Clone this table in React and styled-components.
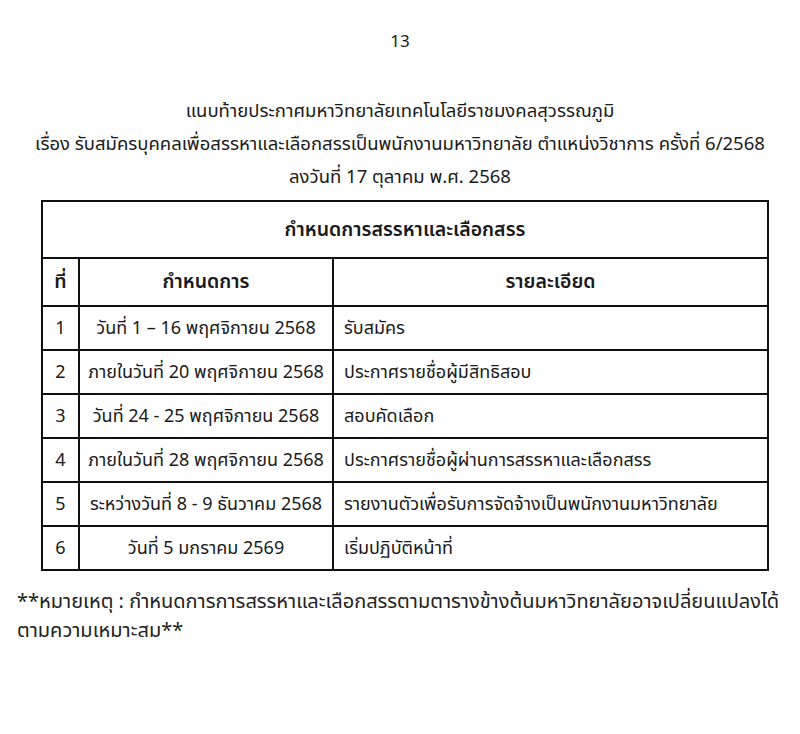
import React from "react";
import styled, { createGlobalStyle } from "styled-components";

const GlobalStyle = createGlobalStyle`
  html, body {
    margin: 0;
    padding: 0;
    background: #ffffff;
  }
  body {
    font-family: "Noto Sans Thai", "Noto Sans", Tahoma, "DejaVu Sans", sans-serif;
    color: #1a1a1a;
  }
`;

const Page = styled.div`
  width: 800px;
  height: 734px;
  box-sizing: border-box;
  padding-top: 28px;
  display: flex;
  flex-direction: column;
  align-items: center;
`;

const PageNumber = styled.div`
  font-size: 17px;
  line-height: 28px;
  height: 28px;
`;

const Heading = styled.div`
  margin-top: 39px;
  display: flex;
  flex-direction: column;
  align-items: center;
  font-size: 18.5px;
  line-height: 33px;
  white-space: nowrap;
`;

const Table = styled.table`
  margin-top: 6px;
  width: 728px;
  border-collapse: collapse;
  table-layout: fixed;
  font-size: 18px;
  margin-left: 10px;
`;

const Cell = styled.td`
  border: 2px solid #111;
  height: ${(p) => p.h || 44}px;
  padding: 0 ${(p) => (p.align === "left" ? "10px" : "4px")};
  text-align: ${(p) => p.align || "center"};
  font-weight: ${(p) => (p.bold ? 600 : 400)};
  font-size: ${(p) => (p.bold ? "19.5px" : "18px")};
  vertical-align: middle;
  white-space: nowrap;
  box-sizing: border-box;
`;

const Note = styled.div`
  align-self: stretch;
  margin-top: 17px;
  padding-left: 17px;
  font-size: 20px;
  line-height: 29px;
  color: #222;
  white-space: nowrap;
`;

const rows = [
  ["1", "วันที่ 1 – 16 พฤศจิกายน 2568", "รับสมัคร"],
  ["2", "ภายในวันที่ 20 พฤศจิกายน 2568", "ประกาศรายชื่อผู้มีสิทธิสอบ"],
  ["3", "วันที่ 24 - 25 พฤศจิกายน 2568", "สอบคัดเลือก"],
  ["4", "ภายในวันที่ 28 พฤศจิกายน 2568", "ประกาศรายชื่อผู้ผ่านการสรรหาและเลือกสรร"],
  ["5", "ระหว่างวันที่ 8 - 9 ธันวาคม 2568", "รายงานตัวเพื่อรับการจัดจ้างเป็นพนักงานมหาวิทยาลัย"],
  ["6", "วันที่ 5 มกราคม 2569", "เริ่มปฏิบัติหน้าที่"],
];

export default function App() {
  return (
    <>
      <GlobalStyle />
      <Page>
        <PageNumber>13</PageNumber>
        <Heading>
          <span>แนบท้ายประกาศมหาวิทยาลัยเทคโนโลยีราชมงคลสุวรรณภูมิ</span>
          <span>
            เรื่อง รับสมัครบุคคลเพื่อสรรหาและเลือกสรรเป็นพนักงานมหาวิทยาลัย
            ตำแหน่งวิชาการ ครั้งที่ 6/2568
          </span>
          <span>ลงวันที่ 17 ตุลาคม พ.ศ. 2568</span>
        </Heading>
        <Table>
          <colgroup>
            <col style={{ width: "37px" }} />
            <col style={{ width: "254px" }} />
            <col />
          </colgroup>
          <tbody>
            <tr>
              <Cell colSpan={3} bold h={57}>
                กำหนดการสรรหาและเลือกสรร
              </Cell>
            </tr>
            <tr>
              <Cell bold h={48}>ที่</Cell>
              <Cell bold h={48}>กำหนดการ</Cell>
              <Cell bold h={48}>รายละเอียด</Cell>
            </tr>
            {rows.map(([no, date, detail]) => (
              <tr key={no}>
                <Cell>{no}</Cell>
                <Cell>{date}</Cell>
                <Cell align="left">{detail}</Cell>
              </tr>
            ))}
          </tbody>
        </Table>
        <Note>
          <div>
            **หมายเหตุ : กำหนดการการสรรหาและเลือกสรรตามตารางข้างต้นมหาวิทยาลัยอาจเปลี่ยนแปลงได้
          </div>
          <div>ตามความเหมาะสม**</div>
        </Note>
      </Page>
    </>
  );
}
